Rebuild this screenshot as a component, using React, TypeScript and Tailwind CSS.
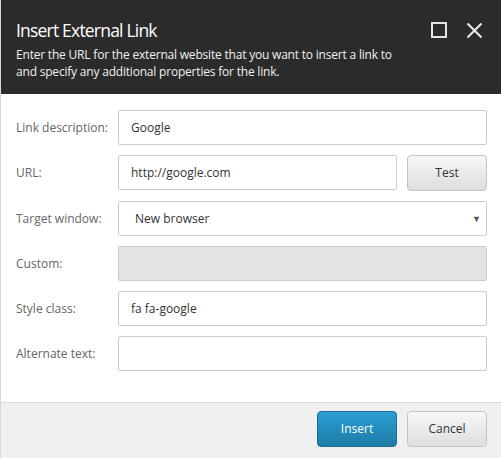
import React from 'react';

const labelCls = 'w-[102px] shrink-0 text-[12px] text-[#666]';
const fieldCls =
  'h-[35px] w-full rounded-[2px] border border-[#ccc] px-[12px] text-[12px] text-[#333] outline-none';
const inputCls = `${fieldCls} bg-white`;

const Row: React.FC<{ label: string; children: React.ReactNode }> = ({ label, children }) => (
  <div className="flex items-center">
    <span className={labelCls}>{label}</span>
    <div className="flex flex-1 gap-[10px]">{children}</div>
  </div>
);

export default function App() {
  return (
    <div
      className="flex h-[458px] w-[501px] bg-[#d9d9d9] pl-[1px]"
      style={{ fontFamily: '"Open Sans", "Noto Sans", sans-serif' }}
    >
      <div className="flex flex-1 flex-col bg-white">
        <div className="flex h-[94px] bg-[#2b2b2b] pl-[15px] pr-[18px] pt-[16px]">
          <div className="flex-1">
            <h1 className="text-[17.5px] leading-[28px] tracking-[-0.8px] text-white">Insert External Link</h1>
            <p className="mt-[2px] whitespace-nowrap text-[12px] leading-[17px] tracking-[-0.2px] text-[#f0f0f0]">
              Enter the URL for the external website that you want to insert a link to
              <br />
              and specify any additional properties for the link.
            </p>
          </div>
          <div className="flex h-[28px] items-center gap-[19px]">
            <svg width="16" height="16" viewBox="0 0 16 16">
              <rect x="1" y="1" width="14" height="14" fill="none" stroke="#e6e6e6" strokeWidth="2" />
            </svg>
            <svg width="17" height="17" viewBox="0 0 17 17">
              <path d="M1.5 1.5 L15.5 15.5 M15.5 1.5 L1.5 15.5" stroke="#e6e6e6" strokeWidth="2.2" />
            </svg>
          </div>
        </div>

        <div className="flex flex-1 flex-col gap-[10px] pl-[15px] pr-[14px] pt-[16px]">
          <Row label="Link description:">
            <input className={inputCls} defaultValue="Google" />
          </Row>
          <Row label="URL:">
            <input className={inputCls} defaultValue="http://google.com" />
            <button className="h-[36px] w-[80px] shrink-0 rounded-[4px] border border-[#c4c4c4] bg-gradient-to-b from-[#f7f7f7] to-[#dedede] text-[12px] text-[#333]">
              Test
            </button>
          </Row>
          <Row label="Target window:">
            <div className={`${inputCls} flex items-center justify-between pl-[16px] pr-[5px]`}>
              <span>New browser</span>
              <span className="text-[9px] text-[#555]">▼</span>
            </div>
          </Row>
          <Row label="Custom:">
            <div className={`${fieldCls} bg-[#e3e3e3]`} />
          </Row>
          <Row label="Style class:">
            <input className={inputCls} defaultValue="fa fa-google" />
          </Row>
          <Row label="Alternate text:">
            <input className={inputCls} defaultValue="" />
          </Row>
        </div>

        <div className="flex h-[56px] items-start justify-end gap-[10px] border-t border-[#dcdcdc] bg-[#f0f0f0] pr-[14px] pt-[8px]">
          <button className="h-[36px] w-[80px] rounded-[4px] border border-[#1c6f94] bg-gradient-to-b from-[#2b9fd3] to-[#1d7ca6] text-[12px] text-white">
            Insert
          </button>
          <button className="h-[36px] w-[80px] rounded-[4px] border border-[#c4c4c4] bg-gradient-to-b from-[#f7f7f7] to-[#dedede] text-[12px] text-[#333]">
            Cancel
          </button>
        </div>
      </div>
    </div>
  );
}
